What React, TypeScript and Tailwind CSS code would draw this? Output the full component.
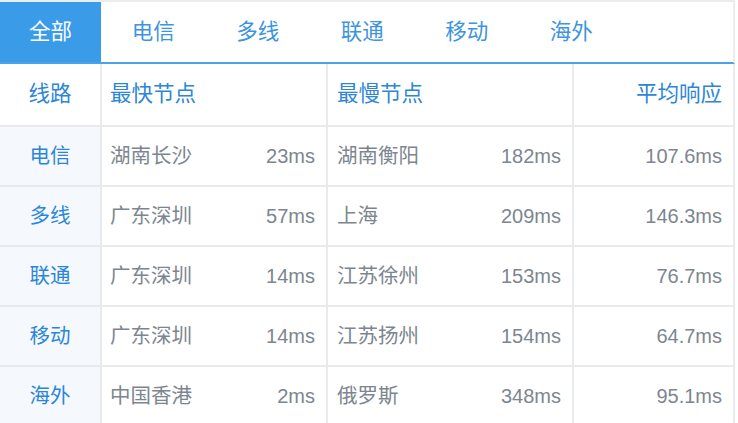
const tabs = ['全部', '电信', '多线', '联通', '移动', '海外']

type Row = {
  line: string
  fastName: string
  fastMs: string
  slowName: string
  slowMs: string
  avg: string
}

const rows: Row[] = [
  { line: '电信', fastName: '湖南长沙', fastMs: '23ms', slowName: '湖南衡阳', slowMs: '182ms', avg: '107.6ms' },
  { line: '多线', fastName: '广东深圳', fastMs: '57ms', slowName: '上海', slowMs: '209ms', avg: '146.3ms' },
  { line: '联通', fastName: '广东深圳', fastMs: '14ms', slowName: '江苏徐州', slowMs: '153ms', avg: '76.7ms' },
  { line: '移动', fastName: '广东深圳', fastMs: '14ms', slowName: '江苏扬州', slowMs: '154ms', avg: '64.7ms' },
  { line: '海外', fastName: '中国香港', fastMs: '2ms', slowName: '俄罗斯', slowMs: '348ms', avg: '95.1ms' },
]

export default function App() {
  return (
    <div
      className="h-[423px] w-[738px] overflow-hidden bg-white text-[20px]"
      style={{ fontFamily: '"Liberation Sans", "Noto Sans CJK SC", sans-serif' }}
    >
      <div className="w-[735px]">
        {/* tabs */}
        <div className="flex border-t-2 border-r-2 border-b-2 border-t-[#ebeced] border-r-[#ebeced] border-b-[#4aa3ea] text-[21.5px]">
          {tabs.map((tab, i) => (
            <div
              key={tab}
              className={`flex h-[60px] items-center justify-center ${
                i === 0 ? 'w-[101px] bg-[#3a9ce8] text-white' : 'w-[104.5px] text-[#3d94e0]'
              }`}
            >
              {tab}
            </div>
          ))}
        </div>

        {/* header */}
        <div className="flex h-[63px] border-b-2 border-[#e9eaec] text-[21.5px] text-[#2e86d6]">
          <div className="flex w-[102px] items-center justify-center border-r-2 border-[#e9eaec]">线路</div>
          <div className="flex w-[226px] items-center border-r-2 border-[#e9eaec] pl-[8px]">最快节点</div>
          <div className="flex w-[246px] items-center border-r-2 border-[#e9eaec] pl-[9px]">最慢节点</div>
          <div className="flex w-[161px] items-center justify-end border-r-2 border-[#e9eaec] pr-[11px]">平均响应</div>
        </div>

        {rows.map((row) => (
          <div key={row.line} className="flex h-[60px] border-b-2 border-[#e9eaec] text-[#7d8690]">
            <div className="flex w-[102px] items-center justify-center border-r-2 border-[#e9eaec] bg-[#f5f9fd] text-[20.5px] text-[#2b86d9]">
              {row.line}
            </div>
            <div className="flex w-[226px] items-center justify-between border-r-2 border-[#e9eaec] pr-[11px] pl-[8px]">
              <span className="text-[20.5px]">{row.fastName}</span>
              <span>{row.fastMs}</span>
            </div>
            <div className="flex w-[246px] items-center justify-between border-r-2 border-[#e9eaec] pr-[11px] pl-[9px]">
              <span className="text-[20.5px]">{row.slowName}</span>
              <span>{row.slowMs}</span>
            </div>
            <div className="flex w-[161px] items-center justify-end border-r-2 border-[#e9eaec] pr-[11px]">{row.avg}</div>
          </div>
        ))}
      </div>
    </div>
  )
}
